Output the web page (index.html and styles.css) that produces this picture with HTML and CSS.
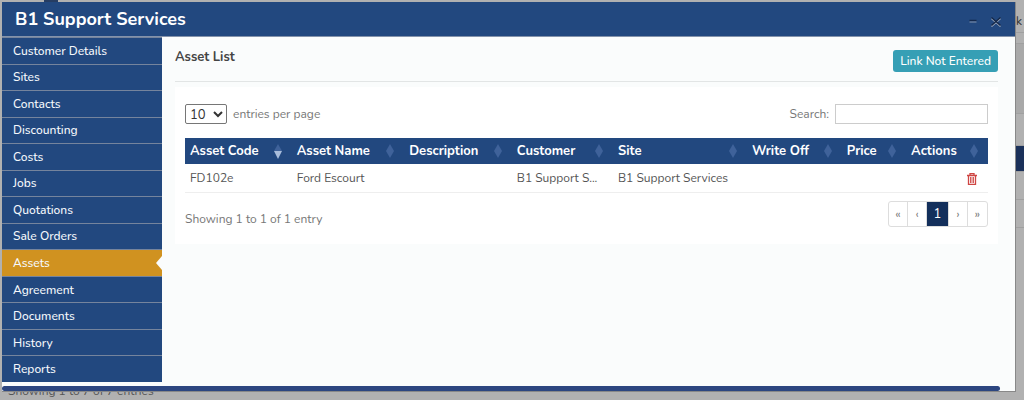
FILE: index.html
```html
<!DOCTYPE html>
<html lang="en">
<head>
<meta charset="utf-8">
<title>B1 Support Services</title>
<link rel="stylesheet" href="styles.css">
</head>
<body>
<div class="page">
  <div class="page-top"></div>
  <div class="page-rows">
    <div class="page-row row-first">k</div>
    <div class="page-row row-band"></div>
    <div class="page-row row-pale"></div>
    <div class="page-row row-gap"></div>
    <div class="page-row row-head"></div>
    <div class="page-row row-data"></div>
    <div class="page-row row-data"></div>
  </div>
  <div class="page-info">Showing 1 to 7 of 7 entries</div>
</div>
<section class="modal">
  <header class="modal-head">
    <h1 class="modal-title">B1 Support Services</h1>
    <button class="win-btn" aria-label="Minimise"><svg width="12" height="12" viewBox="0 0 12 12"><path d="M2.500 4.500h7" stroke="#14294c" stroke-width="1.500"/><path d="M2.500 6h7" stroke="#8293ae" stroke-width="1"/></svg></button>
    <button class="win-btn" aria-label="Close"><svg width="12" height="12" viewBox="0 0 12 12"><path d="M1.500 2.500l9 8M10.500 2.500l-9 8" stroke="#a3afc2" stroke-width="1.500"/><path d="M1.500 1.500l9 8M10.500 1.500l-9 8" stroke="#15294a" stroke-width="1.500"/></svg></button>
  </header>
  <div class="modal-body">
    <nav class="side">
      <a class="side-link" href="#">Customer Details</a>
      <a class="side-link" href="#">Sites</a>
      <a class="side-link" href="#">Contacts</a>
      <a class="side-link" href="#">Discounting</a>
      <a class="side-link" href="#">Costs</a>
      <a class="side-link" href="#">Jobs</a>
      <a class="side-link" href="#">Quotations</a>
      <a class="side-link" href="#">Sale Orders</a>
      <a class="side-link active" href="#">Assets</a>
      <a class="side-link" href="#">Agreement</a>
      <a class="side-link" href="#">Documents</a>
      <a class="side-link" href="#">History</a>
      <a class="side-link" href="#">Reports</a>
    </nav>
    <main class="main">
      <div class="main-head">
        <h2 class="main-title">Asset List</h2>
        <button class="link-btn">Link Not Entered</button>
      </div>
      <div class="card">
        <div class="tools">
          <select class="length" id="length"><option>10</option></select>
          <label for="length">entries per page</label>
          <label class="search-label" for="search">Search:</label>
          <input class="search" id="search" type="search">
        </div>
        <table class="table">
          <colgroup><col class="c-code"><col class="c-name"><col class="c-desc"><col class="c-cust"><col class="c-site"><col class="c-off"><col class="c-price"><col class="c-act"></colgroup>
          <thead>
            <tr>
              <th><div class="th">Asset Code<svg class="sort" viewBox="0 0 8 16"><path d="M4 1l4 7H0z"/><path class="down" d="M0 8h8l-4 8z"/></svg></div></th>
              <th><div class="th">Asset Name<svg class="sort" viewBox="0 0 8 16"><path d="M4 1l4 7-4 7-4-7z"/></svg></div></th>
              <th><div class="th">Description<svg class="sort" viewBox="0 0 8 16"><path d="M4 1l4 7-4 7-4-7z"/></svg></div></th>
              <th><div class="th">Customer<svg class="sort" viewBox="0 0 8 16"><path d="M4 1l4 7-4 7-4-7z"/></svg></div></th>
              <th><div class="th">Site<svg class="sort" viewBox="0 0 8 16"><path d="M4 1l4 7-4 7-4-7z"/></svg></div></th>
              <th><div class="th">Write Off<svg class="sort" viewBox="0 0 8 16"><path d="M4 1l4 7-4 7-4-7z"/></svg></div></th>
              <th><div class="th">Price<svg class="sort" viewBox="0 0 8 16"><path d="M4 1l4 7-4 7-4-7z"/></svg></div></th>
              <th><div class="th">Actions<svg class="sort" viewBox="0 0 8 16"><path d="M4 1l4 7-4 7-4-7z"/></svg></div></th>
            </tr>
          </thead>
          <tbody>
            <tr>
              <td>FD102e</td><td>Ford Escourt</td><td></td><td>B1 Support S...</td><td>B1 Support Services</td><td></td><td></td>
              <td class="act"><button class="trash" aria-label="Delete"><svg width="10" height="12" viewBox="0 0 10 12" fill="none" stroke="#cf4643"><path d="M0 2.500h10M3 2V.5h4V2M1.500 3v8.500h7V3" stroke-width="1.300"/><path d="M3.500 4v6M5 4v6M6.500 4v6" stroke-width=".9"/></svg></button></td>
            </tr>
          </tbody>
        </table>
        <div class="foot">
          <span class="info">Showing 1 to 1 of 1 entry</span>
          <div class="pager">
            <button class="pg">«</button><button class="pg">‹</button><button class="pg current">1</button><button class="pg">›</button><button class="pg">»</button>
          </div>
        </div>
      </div>
    </main>
  </div>
  <div class="scroll"></div>
</section>
</body>
</html>
```
FILE: styles.css
```css
* { box-sizing: border-box; }
body { margin: 0; min-height: 100vh; overflow: hidden; background: #b1b1b1; color: #444; font: 12px/20px Nunito, Lato, sans-serif; }
button, input, select { font: inherit; }
button { cursor: pointer; }

.page { display: flex; flex-direction: column; height: 100vh; }
.page-top { width: 14px; height: 2px; margin-left: 44px; background: #263d63; flex: none; }
.page-rows { flex: 1; display: flex; flex-direction: column; padding-left: 8px; }
.page-row { border-bottom: 1px solid #a0a0a0; text-align: right; flex: none; }
.row-first { height: 31px; padding: 9px 2px 0 0; color: #333; }
.row-band { height: 11px; }
.row-pale { height: 70px; background: #a9a9a9; }
.row-gap { height: 32px; }
.row-head { height: 26px; background: #1b315a; }
.row-data { height: 28px; }
.page-info { height: 19px; padding-left: 8px; color: #555; flex: none; }

.modal { position: fixed; inset: 2px 8px 8px 2px; display: flex; flex-direction: column; background: #fafcfc; border-right: 1px solid #888; border-bottom: 1px solid #888; }
.modal-head { display: flex; align-items: center; height: 35px; padding: 0 13px 0 13px; gap: 11px; background: #22487f; border-bottom: 1px solid #8493ab; flex: none; }
.modal-title { margin: 0; flex: 1; color: #fff; font-size: 18px; font-weight: 700; }
.win-btn { display: flex; padding: 0; border: 0; background: none; margin-top: 6px; }
.modal-body { flex: 1; display: flex; min-height: 0; }
.side { width: 160px; display: flex; flex-direction: column; margin-bottom: 4px; flex: none; }
.side-link { flex: 1; display: flex; align-items: center; padding-left: 11px; color: #f5f8fc; background: #22487f; border-top: 1px solid #75849d; font-weight: 500; text-decoration: none; position: relative; }
.side-link.active { background: #d09220; }
.side-link.active::after { content: ""; position: absolute; right: 0; top: 6px; border: 7px solid transparent; border-right: 6px solid #fafcfc; border-left: 0; }

.main { flex: 1; min-width: 0; padding: 0 17px 0 13px; }
.main-head { display: flex; justify-content: space-between; align-items: center; height: 45px; padding-top: 4px; border-bottom: 1px solid #e2e5e5; }
.main-title { margin: 0 0 8px; font-size: 13px; font-weight: 700; }
.link-btn { height: 22px; padding: 0 7px; border: 0; border-radius: 3px; background: #369fb5; color: #fff; font-weight: 500; }
.card { margin-top: 5px; padding: 17px 10px 15px; background: #fff; color: #777; }
.tools { display: flex; align-items: center; gap: 6px; }
.length { width: 42px; height: 20px; padding: 0; border: 1px solid #767676; border-radius: 2px; background: #fff; color: #333; font-size: 13px; }
.search-label { margin-left: auto; }
.search { width: 153px; height: 20px; padding: 0 4px; border: 1px solid #ccc; border-radius: 0; background: #fff; }
.table { width: 100%; margin-top: 14px; table-layout: fixed; border-collapse: collapse; color: #555; }
.c-code { width: 13.3%; } .c-name { width: 14%; } .c-desc { width: 13.4%; } .c-cust { width: 12.6%; }
.c-site { width: 16.7%; } .c-off { width: 11.8%; } .c-price { width: 8%; } .c-act { width: 10.2%; }
.table th { height: 26px; padding: 0 10px 0 5px; background: #22487f; color: #fff; font-size: 13px; text-align: left; font-weight: 700; white-space: nowrap; }
.th { display: flex; align-items: center; justify-content: space-between; }
.sort { width: 8px; height: 16px; fill: #3f629a; flex: none; }
.sort .down { fill: #a9bddb; }
.table td { height: 28px; padding: 0 0 0 5px; border-bottom: 1px solid #eee; white-space: nowrap; }
.table .act { padding-right: 11px; text-align: right; }
.trash { padding: 0; border: 0; background: none; vertical-align: middle; }
.trash svg { display: block; }
.foot { display: flex; justify-content: space-between; align-items: flex-start; margin-top: 8px; }
.info { padding-top: 8px; }
.pager { display: flex; border: 1px solid #ddd; border-radius: 3px; }
.pg { height: 24px; width: 19px; padding: 0; border: 0; border-right: 1px solid #ddd; background: none; color: #777; }
.pg:last-child { border-right: 0; }
.pg.current { width: 22px; background: #132f5b; color: #fff; font-size: 13px; }
.scroll { height: 5px; margin-right: 15px; border-radius: 3px; background: #2c4680; flex: none; }
```
